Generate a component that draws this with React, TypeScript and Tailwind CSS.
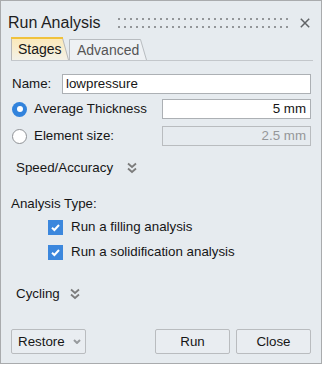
const font = { fontFamily: '"Liberation Sans", Arial, sans-serif' };

const DoubleChevron = () => (
  <svg width="10" height="12" viewBox="0 0 10 12" fill="none">
    <path d="M1 1.5 L5 5 L9 1.5" stroke="#7c7c7c" strokeWidth="1.8" />
    <path d="M1 6.5 L5 10 L9 6.5" stroke="#7c7c7c" strokeWidth="1.8" />
  </svg>
);

const Checkbox = () => (
  <div className="flex items-center justify-center w-[15px] h-[15px] bg-[#3b87dd]">
    <svg width="11" height="11" viewBox="0 0 11 11" fill="none">
      <path d="M2 5.8 L4.4 8 L9 3" stroke="#ffffff" strokeWidth="2" />
    </svg>
  </div>
);

const Grip = () => (
  <div className="flex flex-col gap-[6px] ml-auto">
    {[0, 1].map((r) => (
      <div key={r} className="flex gap-[4px]">
        {Array.from({ length: 29 }).map((_, i) => (
          <span key={i} className="block w-[2px] h-[2px] bg-[#939699]" />
        ))}
      </div>
    ))}
  </div>
);

const App: React.FC = () => (
  <div style={font} className="w-[323px] h-[365px] bg-white">
    <div className="flex flex-col w-[322px] h-[364px] border border-[#a9abad] bg-[#e6ebef] text-[13.33px] text-[#161616]">
      {/* title */}
      <div className="flex items-center h-[20px] mt-[12px] pl-[7px] pr-[11px]">
        <span className="text-[16px] text-[#1e1e1e]">Run Analysis</span>
        <Grip />
        <svg className="ml-[12px]" width="10" height="10" viewBox="0 0 10 10">
          <path d="M0.8 0.8 L9.2 9.2 M9.2 0.8 L0.8 9.2" stroke="#606366" strokeWidth="1.5" />
        </svg>
      </div>

      {/* tabs */}
      <div className="flex items-end h-[24px] mt-[4px] ml-[10px] mr-[8px] border-b border-[#c3c7cb]">
        <div className="relative w-[58px] h-[23px] text-[14px]">
          <svg className="absolute inset-0" width="58" height="23" viewBox="0 0 58 23">
            <defs>
              <linearGradient id="tabg" x1="0" y1="0" x2="0" y2="1">
                <stop offset="0" stopColor="#fbe9b8" />
                <stop offset="1" stopColor="#f3f1e8" />
              </linearGradient>
            </defs>
            <path d="M0.5 23 L0.5 1 L51.5 1 L57.5 23" fill="url(#tabg)" stroke="#b8b8b8" />
            <path d="M0 1 L52 1" stroke="#f0c23c" strokeWidth="2" />
          </svg>
          <span className="relative block pl-[7px] pt-[4px] leading-[17px]">Stages</span>
        </div>
        <div className="relative w-[78px] h-[21px] text-[14px] text-[#555]">
          <svg className="absolute inset-0" width="78" height="21" viewBox="0 0 78 21">
            <path d="M0.5 21 L0.5 0.5 L71.5 0.5 L77.5 21" fill="#eef1f4" stroke="#b8bcc0" />
          </svg>
          <span className="relative block pl-[8px] pt-[3px] leading-[17px]">Advanced</span>
        </div>
      </div>

      {/* form */}
      <div className="flex flex-col ml-[10px] mr-[10px]">
        <div className="flex items-center h-[20px] mt-[13px]">
          <span className="w-[51px] pl-[1px]">Name:</span>
          <div className="flex-1 h-[20px] border border-[#acb0b4] bg-white pl-[3px] leading-[18px]">lowpressure</div>
        </div>

        <div className="flex items-center h-[20px] mt-[5px]">
          <div className="flex items-center justify-center w-[15px] h-[15px] ml-[1px] rounded-full bg-[#3283dc]">
            <div className="w-[6px] h-[6px] rounded-full bg-white" />
          </div>
          <span className="ml-[7px]">Average Thickness</span>
          <div className="ml-auto w-[149px] h-[20px] border border-[#acb0b4] bg-white pr-[4px] text-right leading-[18px]">5 mm</div>
        </div>

        <div className="flex items-center h-[20px] mt-[7px]">
          <div className="w-[15px] h-[15px] ml-[1px] rounded-full border border-[#8f9296] bg-white" />
          <span className="ml-[7px]">Element size:</span>
          <div className="ml-auto w-[149px] h-[20px] border border-[#b9bcbf] pr-[4px] text-right leading-[18px] text-[#959799]">2.5 mm</div>
        </div>

        <div className="flex items-center h-[20px] mt-[12px] pl-[5px]">
          <span>Speed/Accuracy</span>
          <span className="ml-[14px]"><DoubleChevron /></span>
        </div>

        <div className="flex items-center h-[20px] mt-[16px]">
          <span>Analysis Type:</span>
        </div>
        <div className="flex items-center h-[20px] mt-[3px] pl-[37px]">
          <Checkbox />
          <span className="ml-[8px]">Run a filling analysis</span>
        </div>
        <div className="flex items-center h-[20px] mt-[5px] pl-[37px]">
          <Checkbox />
          <span className="ml-[8px]">Run a solidification analysis</span>
        </div>

        <div className="flex items-center h-[20px] mt-[22px] pl-[5px]">
          <span>Cycling</span>
          <span className="ml-[10px]"><DoubleChevron /></span>
        </div>

        <div className="flex items-center h-[25px] mt-[25px]">
          <div className="flex items-center w-[75px] h-[25px] border border-[#b9bcbf] rounded-[2px] bg-[#e9edf1] pl-[6px]">
            <span>Restore</span>
            <svg className="ml-[8px]" width="8" height="5" viewBox="0 0 8 5">
              <path d="M1 1 L4 4 L7 1" stroke="#979a9d" strokeWidth="2" fill="none" />
            </svg>
          </div>
          <div className="flex items-center justify-center w-[75px] h-[25px] ml-auto border border-[#b9bcbf] rounded-[2px] bg-[#e9edf1]">Run</div>
          <div className="flex items-center justify-center w-[75px] h-[25px] ml-[6px] border border-[#b9bcbf] rounded-[2px] bg-[#e9edf1]">Close</div>
        </div>
      </div>
    </div>
  </div>
);

export default App;
